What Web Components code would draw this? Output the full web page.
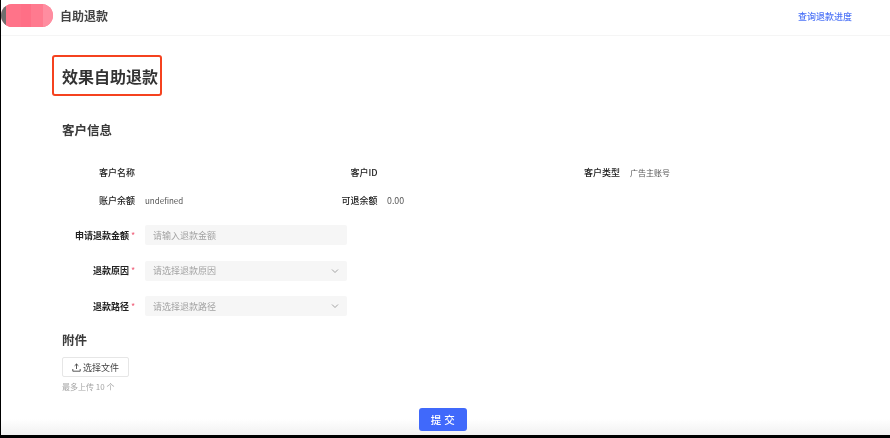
<!DOCTYPE html>
<html lang="zh">
<head>
<meta charset="utf-8">
<title>自助退款</title>
<style>
html, body { margin: 0; height: 100%; background: #000; overflow: hidden; }
body {
    font-family: "Noto Sans CJK SC", "Liberation Sans", sans-serif;
    color: #2b2b2b;
}
</style>
</head>
<body>
<refund-page>
    <top-bar title="自助退款" link="查询退款进度"></top-bar>
    <page-title>效果自助退款</page-title>
    <section-title>客户信息</section-title>
    <info-grid>
        <info-item label="客户名称"></info-item>
        <info-item label="客户ID"></info-item>
        <info-item label="客户类型" value="广告主账号"></info-item>
        <info-item label="账户余额" value="undefined"></info-item>
        <info-item label="可退余额" value="0.00" numeric></info-item>
    </info-grid>
    <form-row label="申请退款金额" placeholder="请输入退款金额"></form-row>
    <form-row label="退款原因" placeholder="请选择退款原因" select></form-row>
    <form-row label="退款路径" placeholder="请选择退款路径" select></form-row>
    <section-title compact>附件</section-title>
    <upload-box hint="最多上传 10 个"></upload-box>
    <submit-bar>提 交</submit-bar>
</refund-page>

<script>
class RefundPage extends HTMLElement {
    constructor() {
        super();
        this.attachShadow({ mode: 'open' });
        this.shadowRoot.innerHTML = `
        <style>
        :host {
            display: flex;
            flex-direction: column;
            box-sizing: border-box;
            width: 889px;
            height: 435px;
            margin-left: 1px;
            background: #fff;
            overflow: hidden;
            filter: blur(0.5px);
        }
        </style>
        <slot></slot>`;
    }
}

class TopBar extends HTMLElement {
    constructor() {
        super();
        this.attachShadow({ mode: 'open' });
        const title = this.getAttribute('title') || '';
        const link = this.getAttribute('link') || '';
        this.removeAttribute('title');
        this.shadowRoot.innerHTML = `
        <style>
        :host {
            display: flex;
            align-items: center;
            box-sizing: border-box;
            height: 36px;
            padding: 0 38px 4px 0;
            border-bottom: 1px solid #f5f5f5;
        }
        .logo {
            display: flex;
            width: 52px;
            height: 23px;
            border-radius: 12px;
            overflow: hidden;
            background: #ff7f93;
        }
        .logo i { display: block; height: 100%; }
        h1 {
            margin: 0 0 0 7px;
            font-size: 12px;
            font-weight: 700;
            color: #444;
            flex: 1;
        }
        a {
            margin-top: 2px;
            font-size: 9px;
            font-weight: 500;
            color: #4f75f7;
            text-decoration: none;
        }
        </style>
        <div class="logo">
            <i style="width:5px;background:#6e6e6e"></i>
            <i style="width:15px;background:#ff7389"></i>
            <i style="width:10px;background:#ff6f86"></i>
            <i style="width:12px;background:#ff7a8f"></i>
            <i style="width:10px;background:#ff8da0"></i>
        </div>
        <h1>${title}</h1>
        <a href="#">${link}</a>`;
    }
}

class PageTitle extends HTMLElement {
    constructor() {
        super();
        this.attachShadow({ mode: 'open' });
        this.shadowRoot.innerHTML = `
        <style>
        :host {
            display: flex;
            align-items: center;
            box-sizing: border-box;
            width: 110px;
            height: 41px;
            margin: 19px 0 0 51px;
            padding-left: 8px;
            border: 2px solid #f5421f;
            border-radius: 3px;
            font-size: 16px;
            font-weight: 700;
            color: #333;
            white-space: nowrap;
        }
        </style>
        <slot></slot>`;
    }
}

class SectionTitle extends HTMLElement {
    constructor() {
        super();
        this.attachShadow({ mode: 'open' });
        this.shadowRoot.innerHTML = `
        <style>
        :host {
            display: block;
            height: 20px;
            margin: 24px 0 0 61px;
            font-size: 12.5px;
            line-height: 20px;
            font-weight: 700;
            color: #3a3a3a;
        }
        :host([compact]) { margin-top: 14px; }
        </style>
        <slot></slot>`;
    }
}

class InfoGrid extends HTMLElement {
    constructor() {
        super();
        this.attachShadow({ mode: 'open' });
        this.shadowRoot.innerHTML = `
        <style>
        :host {
            display: grid;
            grid-template-columns: repeat(3, 242.5px);
            grid-auto-rows: 28px;
            margin: 18px 0 0 0;
        }
        </style>
        <slot></slot>`;
    }
}

class InfoItem extends HTMLElement {
    constructor() {
        super();
        this.attachShadow({ mode: 'open' });
        const label = this.getAttribute('label') || '';
        const value = this.getAttribute('value') || '';
        this.shadowRoot.innerHTML = `
        <style>
        :host {
            display: flex;
            align-items: center;
            font-size: 9px;
            white-space: nowrap;
        }
        .label { width: 134px; text-align: right; color: #222; font-weight: 500; }
        .value { margin-left: 10px; font-size: 8px; color: #555; }
        :host([numeric]) .value { margin-left: 9.5px; font-size: 8.8px; }
        </style>
        <span class="label">${label}</span>
        <span class="value">${value}</span>`;
    }
}

class FormRow extends HTMLElement {
    constructor() {
        super();
        this.attachShadow({ mode: 'open' });
        const label = this.getAttribute('label') || '';
        const placeholder = this.getAttribute('placeholder') || '';
        const arrow = this.hasAttribute('select')
            ? `<svg width="8" height="8" viewBox="0 0 8 8"><path d="M1 2.5 4 5.5 7 2.5" fill="none" stroke="#999" stroke-width="0.9"/></svg>`
            : '';
        this.shadowRoot.innerHTML = `
        <style>
        :host {
            display: flex;
            align-items: center;
            height: 20px;
            margin-top: 15.5px;
            font-size: 9px;
        }
        :host(:first-of-type) { margin-top: 11px; }
        .label { width: 128px; text-align: right; color: #222; font-weight: 700; white-space: nowrap; }
        .star { width: 16px; padding-left: 2px; box-sizing: border-box; color: #f0607a; }
        .field {
            display: flex;
            align-items: center;
            justify-content: space-between;
            box-sizing: border-box;
            width: 202px;
            height: 20px;
            padding: 0 8px;
            border-radius: 2px;
            background: #f6f6f6;
            color: #a3a3a3;
        }
        </style>
        <span class="label">${label}</span>
        <span class="star">*</span>
        <div class="field"><span>${placeholder}</span>${arrow}</div>`;
    }
}

class UploadBox extends HTMLElement {
    constructor() {
        super();
        this.attachShadow({ mode: 'open' });
        const hint = this.getAttribute('hint') || '';
        this.shadowRoot.innerHTML = `
        <style>
        :host {
            display: block;
            margin: 7px 0 0 61px;
            font-size: 9px;
        }
        .btn {
            display: flex;
            align-items: center;
            justify-content: center;
            gap: 2px;
            box-sizing: border-box;
            width: 67px;
            height: 20px;
            border: 1px solid #e6e6e6;
            border-radius: 2px;
            color: #444;
        }
        p {
            margin: 4px 0 0;
            font-size: 8px;
            line-height: 12px;
            color: #a5a5a5;
        }
        </style>
        <div class="btn">
            <svg width="9" height="9" viewBox="0 0 9 9"><path d="M4.5 6V1M2.6 2.8 4.5 1l1.9 1.8M.8 6v2.2h7.4V6" fill="none" stroke="#444" stroke-width="0.9"/></svg>
            <span>选择文件</span>
        </div>
        <p>${hint}</p>`;
    }
}

class SubmitBar extends HTMLElement {
    constructor() {
        super();
        this.attachShadow({ mode: 'open' });
        this.shadowRoot.innerHTML = `
        <style>
        :host {
            display: flex;
            justify-content: center;
            flex: 1;
            padding: 15px 0 0 0;
            background: linear-gradient(to bottom, #fff 0, #fff 62%, #f1f1f1 100%);
        }
        button {
            box-sizing: border-box;
            width: 48px;
            height: 23px;
            margin-right: 5px;
            padding: 0;
            border: 0;
            border-radius: 3px;
            background: #4069fb;
            color: #fff;
            font: 500 10.5px "Noto Sans CJK SC", sans-serif;
            letter-spacing: 0.3px;
        }
        </style>
        <button type="button"><slot></slot></button>`;
    }
}

customElements.define('refund-page', RefundPage);
customElements.define('top-bar', TopBar);
customElements.define('page-title', PageTitle);
customElements.define('section-title', SectionTitle);
customElements.define('info-grid', InfoGrid);
customElements.define('info-item', InfoItem);
customElements.define('form-row', FormRow);
customElements.define('upload-box', UploadBox);
customElements.define('submit-bar', SubmitBar);
</script>
</body>
</html>
